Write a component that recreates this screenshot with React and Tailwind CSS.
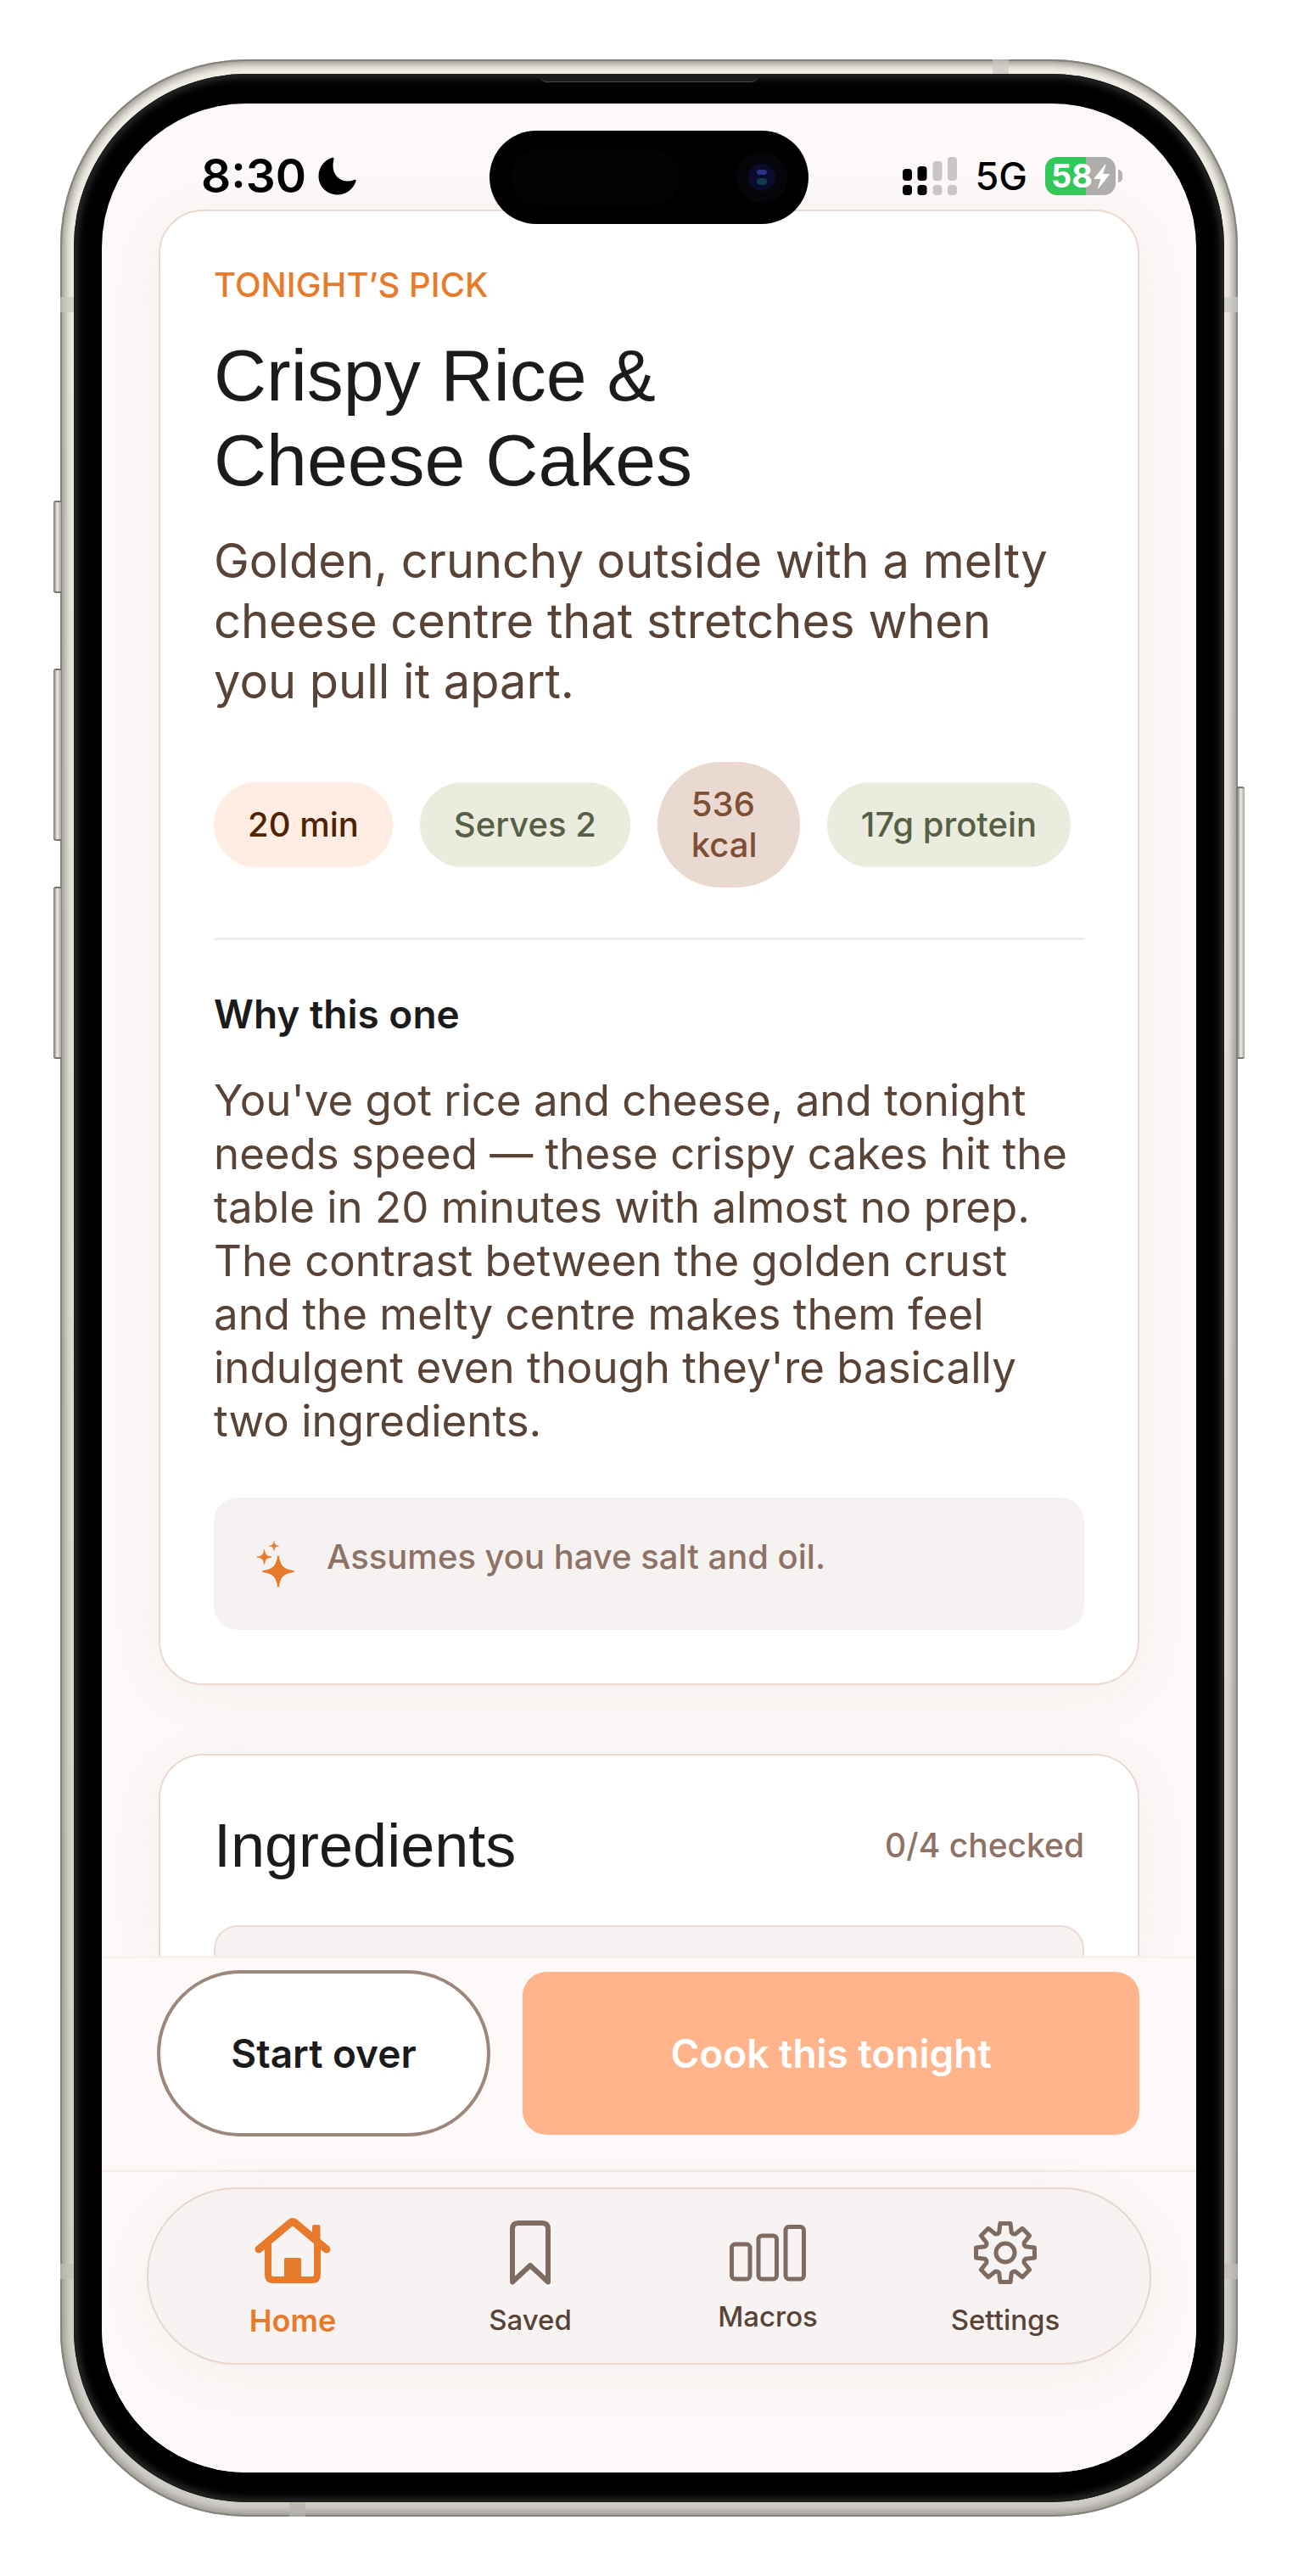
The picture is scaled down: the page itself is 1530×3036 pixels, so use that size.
import React from "react";

const TAGS = [
  { label: ["20 min"], className: "bg-[#ffece2] text-[#4f2400]" },
  { label: ["Serves 2"], className: "bg-[#eaecdd] text-[#585f47]" },
  { label: ["536", "kcal"], className: "min-w-[168px] bg-[#ead9d1] text-[#7f4f33]" },
  { label: ["17g protein"], className: "bg-[#eaecdd] text-[#585f47]" },
];

// eight-tooth outline, two outer points and a shallow valley per tooth
const GEAR_POINTS = Array.from({ length: 8 }, (_, i) => {
  const at = (deg, r) => {
    const a = ((i * 45 + deg) * Math.PI) / 180;
    return `${(38 + r * Math.sin(a)).toFixed(2)},${(38 - r * Math.cos(a)).toFixed(2)}`;
  };
  return [at(-10, 35), at(10, 35), at(17, 25), at(22.5, 24), at(28, 25)].join(" ");
}).join(" ");

function HomeIcon() {
  return (
    <svg width="90" height="78" viewBox="0 0 90 78" fill="none" stroke="currentColor" aria-hidden="true">
      <path d="M5 37 L42 6 Q45 3.500 48 6 L85 37" strokeWidth="9" strokeLinecap="round" strokeLinejoin="round" />
      <path d="M16 30 V67 Q16 73 22 73 H68 Q74 73 74 67 V30" strokeWidth="8" />
      <rect x="35" y="47" width="20" height="27" rx="2" fill="currentColor" stroke="none" />
      <path d="M68 10.500 Q68 8 70.500 8 H75 Q77.500 8 77.500 10.500 V30 L68 22 Z" fill="currentColor" stroke="none" />
    </svg>
  );
}

function BookmarkIcon() {
  return (
    <svg width="48" height="76" viewBox="0 0 48 76" fill="none" stroke="currentColor" aria-hidden="true">
      <path
        d="M3 72.500 V10 Q3 3 10 3 H38 Q45 3 45 10 V72.500 L24 53 Z"
        strokeWidth="6"
        strokeLinejoin="round"
      />
    </svg>
  );
}

function BarsIcon() {
  return (
    <svg width="90" height="67" viewBox="0 0 90 67" fill="none" stroke="currentColor" strokeWidth="5" aria-hidden="true">
      <rect x="2.500" y="23" width="21.500" height="41" rx="4" />
      <rect x="34" y="13" width="21.500" height="51" rx="4" />
      <rect x="66" y="2.500" width="21.500" height="61.500" rx="4" />
    </svg>
  );
}

function GearIcon() {
  return (
    <svg width="76" height="76" viewBox="0 0 76 76" fill="none" stroke="currentColor" strokeWidth="5" aria-hidden="true">
      <polygon points={GEAR_POINTS} strokeLinejoin="round" />
      <circle cx="38" cy="38" r="11" />
    </svg>
  );
}

function SparklesIcon() {
  const star = "M0 -20 C2.500 -6 6 -2.500 20 0 C6 2.500 2.500 6 0 20 C-2.500 6 -6 2.500 -20 0 C-6 -2.500 -2.500 -6 0 -20 Z";
  return (
    <svg
      className="mt-[5px] shrink-0 text-[#e87b2b]"
      width="46"
      height="55"
      viewBox="0 0 46 55"
      fill="currentColor"
      stroke="currentColor"
      strokeLinejoin="round"
      aria-hidden="true"
    >
      <path d={star} transform="translate(26 36) scale(0.92)" strokeWidth="1.500" />
      <path d={star} transform="translate(9.500 19) scale(0.43)" strokeWidth="2" />
      <path d={star} transform="translate(21 6) scale(0.28)" strokeWidth="2" />
    </svg>
  );
}

function StatusBar() {
  return (
    <header className="flex h-[125px] items-start justify-between pt-[63px] pr-[87px] pl-[117px] text-black">
      <div className="flex h-[45px] items-center gap-[14px]">
        <time className="text-[55px] leading-[45px] font-semibold">8:30</time>
        <svg width="46" height="46" viewBox="0 0 46 46" aria-hidden="true">
          <path d="M16 1 C7 4 0.500 12 0.500 22.500 C0.500 35 10.500 44.500 23 44.500 C33 44.500 41.500 38 44.500 28.500 C45 26.500 44 26.500 42.500 27 C40 28 37.500 28.500 35 28.500 C25 28.500 17.500 21 17.500 10.500 C17.500 7.500 18 5 18.500 3 C19 1 18 0.300 16 1 Z" />
        </svg>
      </div>
      <div className="flex h-[45px] items-center gap-[21px]">
        <svg width="65" height="45" viewBox="0 0 65 45" aria-hidden="true">
          <rect x="0" y="14" width="11" height="14" rx="4" />
          <rect x="17.500" y="11" width="11" height="17" rx="4" />
          <rect x="35.500" y="5" width="11" height="23" rx="4" fill="#c7c6c4" />
          <rect x="53" y="0" width="11" height="28" rx="4" fill="#c7c6c4" />
          <rect x="0" y="33" width="11" height="12" rx="4" />
          <rect x="17.500" y="33" width="11" height="12" rx="4" />
          <rect x="35.500" y="33" width="11" height="12" rx="4" fill="#c7c6c4" />
          <rect x="53" y="33" width="11" height="12" rx="4" fill="#c7c6c4" />
        </svg>
        <span className="text-[45px] leading-[45px] font-medium">5G</span>
        <div className="flex items-center gap-[3px]">
          <div className="flex h-[45px] w-[83px] items-center justify-center gap-px rounded-[14px] bg-linear-to-r from-[#34c759] from-58% to-[#afaeac] to-58% text-white">
            <span className="text-[38px] leading-[45px] font-bold">58</span>
            <svg width="19" height="30" viewBox="-1 -1 19 30" fill="currentColor" stroke="currentColor" strokeLinejoin="round" aria-hidden="true">
              <path d="M13 0 L0 16.500 H8 L4.500 28 L17.500 11.500 H9.500 Z" />
            </svg>
          </div>
          <div className="h-[15px] w-[5px] rounded-r-full bg-[#b5b3b2]" />
        </div>
      </div>
    </header>
  );
}

function RecipeCard() {
  return (
    <article className="rounded-[52px] border-2 border-[#ead9d1] bg-white p-[63px] shadow-[0_12px_72px_rgba(70,50,40,0.05)]">
      <p className="text-[40px] leading-[48px] font-medium text-[#e87b2b]">TONIGHT’S PICK</p>
      <h1 className="mt-[32px] font-['Liberation_Sans',sans-serif] text-[86px] leading-[100px] text-[#1c1b1b]">
        Crispy Rice &amp;
        <br />
        Cheese Cakes
      </h1>
      <p className="mt-[34px] text-[56px] leading-[71px] text-[#594336]">
        Golden, crunchy outside with a melty
        <br />
        cheese centre that stretches when
        <br />
        you pull it apart.
      </p>

      <ul className="mt-[59px] flex items-center gap-[32px] text-[40px] leading-[48px] font-medium">
        {TAGS.map((tag) => (
          <li key={tag.label[0]} className={`rounded-[74px] px-[40px] py-[26px] whitespace-nowrap ${tag.className}`}>
            {tag.label.map((line) => (
              <span key={line} className="block">
                {line}
              </span>
            ))}
          </li>
        ))}
      </ul>

      <hr className="mt-[59px] border-t-[3px] border-[#eeeeec]" />

      <h2 className="mt-[57px] text-[46px] leading-[60px] font-semibold text-[#1c1b1b]">Why this one</h2>
      <p className="mt-[40px] text-[51px] leading-[63px] text-[#594336]">
        You've got rice and cheese, and tonight
        <br />
        needs speed — these crispy cakes hit the
        <br />
        table in 20 minutes with almost no prep.
        <br />
        The contrast between the golden crust
        <br />
        and the melty centre makes them feel
        <br />
        indulgent even though they're basically
        <br />
        two ingredients.
      </p>

      <div className="mt-[59px] flex items-start gap-[37px] rounded-[28px] bg-[#f6f2f1] px-[50px] pt-[46px] pb-[50px]">
        <SparklesIcon />
        <p className="text-[40px] leading-[48px] font-medium text-[#8d7265]">Assumes you have salt and oil.</p>
      </div>
    </article>
  );
}

function IngredientsCard() {
  return (
    <section className="mt-[81px] rounded-t-[52px] border-2 border-b-0 border-[#ead9d1] bg-white px-[63px] pt-[63px] shadow-[0_12px_72px_rgba(70,50,40,0.05)]">
      <div className="flex items-center justify-between">
        <h2 className="font-['Liberation_Sans',sans-serif] text-[72px] leading-[86px] text-[#1c1b1b]">Ingredients</h2>
        <span className="text-[39px] leading-[48px] font-medium text-[#8d7265]">0/4 checked</span>
      </div>
      {/* top edge of the checklist, the rest is scrolled under the action bar */}
      <div className="mt-[51px] h-[36px] rounded-t-[28px] border-2 border-b-0 border-[#eadbd4] bg-[#f6f2f1]" />
    </section>
  );
}

function ActionBar() {
  return (
    <div className="relative flex items-center gap-[38px] border-t-[3px] border-[#f7f1ed] bg-[#fdf9f8] pt-[14px] pr-[67px] pb-[39px] pl-[65px] text-[46px] leading-[60px] font-semibold">
      <button
        type="button"
        className="h-[196px] w-[393px] shrink-0 rounded-[98px] border-4 border-[#9d877d] bg-white text-[#1c1b1b]"
      >
        Start over
      </button>
      <button type="button" className="h-[192px] flex-1 rounded-[28px] bg-[#ffb48b] text-white">
        Cook this tonight
      </button>
    </div>
  );
}

function NavItem({ icon, label, active }) {
  return (
    <a
      href="#"
      aria-current={active ? "page" : undefined}
      className={
        active
          ? "flex flex-1 flex-col items-center justify-center gap-[21px] text-[#e87b2b]"
          : "flex flex-1 flex-col items-center justify-center gap-[21px] text-[#7e6b61]"
      }
    >
      {icon}
      <span
        className={
          active
            ? "text-[36px] leading-[44px] font-semibold"
            : "text-[33px] leading-[40px] font-medium text-[#594336]"
        }
      >
        {label}
      </span>
    </a>
  );
}

function TabBar() {
  return (
    <div className="relative border-t-[3px] border-[#f6edea] bg-[#fdf9f8] px-[53px] pt-[18px] pb-[127px]">
      <nav className="flex h-[209px] rounded-[104px] border-2 border-[#e8d6cd] bg-[#f6f3f2] px-[30px] pt-[6px] shadow-[0_12px_72px_rgba(70,50,40,0.05)]">
        <NavItem icon={<HomeIcon />} label="Home" active />
        <NavItem icon={<BookmarkIcon />} label="Saved" />
        <NavItem icon={<BarsIcon />} label="Macros" />
        <NavItem icon={<GearIcon />} label="Settings" />
      </nav>
    </div>
  );
}

function DeviceFrame({ children }) {
  const sideButton =
    "absolute w-[9px] bg-linear-to-r from-[#77756f] via-[#ecebe5] to-[#a9a7a1] border-y-2 border-[#77756f]";
  return (
    <div className="relative rounded-[220px] bg-linear-to-b from-[#f0eee5] to-[#cfcdc7] px-[16px] py-[17px] shadow-[inset_0_0_0_2px_#84827b,inset_0_0_8px_6px_#9b9992]">
      <div className={`${sideButton} top-[520px] -left-[8px] h-[109px] rounded-l-[3px]`} />
      <div className={`${sideButton} top-[718px] -left-[8px] h-[203px] rounded-l-[3px]`} />
      <div className={`${sideButton} top-[975px] -left-[8px] h-[203px] rounded-l-[3px]`} />
      <div className={`${sideButton} top-[857px] -right-[8px] h-[321px] rounded-r-[3px]`} />

      {/* antenna bands */}
      <div className="absolute top-0 right-[270px] h-[17px] w-[19px] bg-[#c9c7c0]/70" />
      <div className="absolute bottom-0 left-[270px] h-[17px] w-[19px] bg-[#b5b3ad]/70" />
      <div className="absolute top-[280px] left-0 h-[18px] w-[16px] bg-[#c9c7c0]/70" />
      <div className="absolute top-[280px] right-0 h-[18px] w-[16px] bg-[#c9c7c0]/70" />
      <div className="absolute bottom-[280px] left-0 h-[18px] w-[16px] bg-[#c0beb8]/70" />
      <div className="absolute right-0 bottom-[280px] h-[18px] w-[16px] bg-[#c0beb8]/70" />

      <div className="relative rounded-[204px] bg-black px-[33px] py-[35px] shadow-[inset_0_0_0_2px_#1d1d1c,inset_0_0_12px_2px_#454545]">
        <div className="absolute top-px left-1/2 h-[9px] w-[257px] -translate-x-1/2 rounded-b-[8px] border-b border-[#4a4a4a] bg-[#1c1c1c]" />
        <div className="relative overflow-hidden rounded-[170px] bg-[#fdf9f8]">
          {children}
          {/* camera island */}
          <div className="absolute top-[32px] left-1/2 flex h-[110px] w-[376px] -translate-x-1/2 items-center justify-between rounded-full bg-black px-[25px]">
            <div className="h-[66px] w-[200px] rounded-full bg-[#030303]" />
            <div className="flex h-[60px] w-[60px] items-center justify-center rounded-full bg-[#07050a]">
              <div className="flex h-[32px] w-[32px] flex-col items-center justify-center gap-[4px] rounded-full bg-[#0b0c2c]">
                <div className="h-[6px] w-[12px] rounded-full bg-[#2b3184]" />
                <div className="h-[8px] w-[12px] rounded-full bg-[#123a4a]" />
              </div>
            </div>
          </div>
        </div>
      </div>
    </div>
  );
}

export default function App() {
  return (
    <div className="bg-white px-[71px] py-[70px] font-[Inter,sans-serif]">
      <DeviceFrame>
        <StatusBar />
        <main className="px-[67px]">
          <RecipeCard />
          <IngredientsCard />
        </main>
        <ActionBar />
        <TabBar />
      </DeviceFrame>
    </div>
  );
}
